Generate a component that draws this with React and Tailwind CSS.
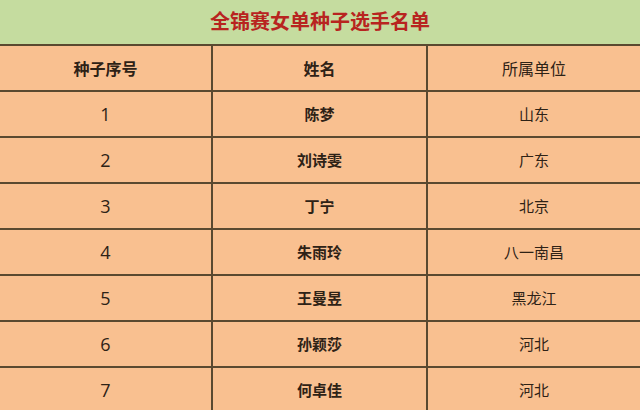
export default function App() {
  const rows = [
    ["1", "陈梦", "山东"],
    ["2", "刘诗雯", "广东"],
    ["3", "丁宁", "北京"],
    ["4", "朱雨玲", "八一南昌"],
    ["5", "王曼昱", "黑龙江"],
    ["6", "孙颖莎", "河北"],
    ["7", "何卓佳", "河北"],
  ];
  const font = { fontFamily: '"Noto Sans CJK SC", "Noto Sans", sans-serif' };
  return (
    <div className="w-[640px] h-[410px] overflow-hidden bg-[#f9c090] text-[#2e2216]" style={font}>
      <div className="h-[44px] bg-[#c5dc9f] flex items-center justify-center pb-[2px]">
        <span className="text-[20px] font-bold text-[#b8241f] leading-none">全锦赛女单种子选手名单</span>
      </div>
      <div className="flex h-[46px] border-t-2 border-[#5a4930]">
        <div className="w-[213px] border-r-2 border-[#5a4930] flex items-center justify-center text-[16px] font-bold">种子序号</div>
        <div className="w-[215px] border-r-2 border-[#5a4930] flex items-center justify-center text-[16px] font-bold">姓名</div>
        <div className="flex-1 flex items-center justify-center text-[16px]">所属单位</div>
      </div>
      {rows.map((r, i) => (
        <div key={i} className="flex h-[46px] border-t-2 border-[#5a4930]">
          <div className="w-[213px] border-r-2 border-[#5a4930] flex items-center justify-center text-[18px] font-medium" style={{ fontFamily: '"Open Sans", "Liberation Sans", sans-serif' }}>{r[0]}</div>
          <div className="w-[215px] border-r-2 border-[#5a4930] flex items-center justify-center text-[15px] font-bold">{r[1]}</div>
          <div className="flex-1 flex items-center justify-center text-[15px]">{r[2]}</div>
        </div>
      ))}
    </div>
  );
}
